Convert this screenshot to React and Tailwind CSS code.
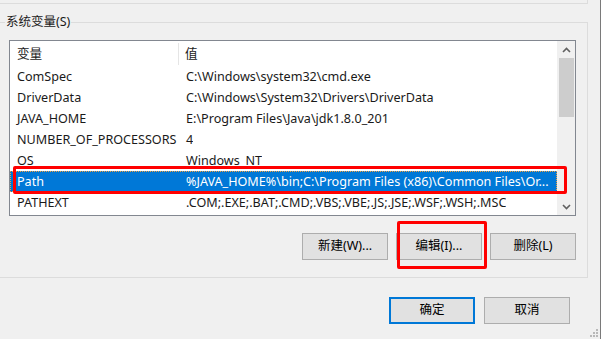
import React from "react";

const ROWS = [
  { name: "ComSpec", value: "C:\\Windows\\system32\\cmd.exe" },
  { name: "DriverData", value: "C:\\Windows\\System32\\Drivers\\DriverData" },
  { name: "JAVA_HOME", value: "E:\\Program Files\\Java\\jdk1.8.0_201" },
  { name: "NUMBER_OF_PROCESSORS", value: "4" },
  { name: "OS", value: "Windows_NT" },
  {
    name: "Path",
    value: "%JAVA_HOME%\\bin;C:\\Program Files (x86)\\Common Files\\Or...",
    selected: true,
  },
  { name: "PATHEXT", value: ".COM;.EXE;.BAT;.CMD;.VBS;.VBE;.JS;.JSE;.WSF;.WSH;.MSC" },
];

const FONT = { fontFamily: "'Noto Sans', 'Noto Sans CJK SC', sans-serif" };

const Chevron = ({ up }) => (
  <svg width="9" height="6" viewBox="0 0 9 6">
    <polyline
      points={up ? "1,5 4.5,1.5 8,5" : "1,1 4.5,4.5 8,1"}
      fill="none"
      stroke="#606060"
      strokeWidth="1.6"
    />
  </svg>
);

const WinButton = ({ children, primary }) => (
  <button
    className={
      primary
        ? "w-[86px] h-[27px] bg-[#e1e1e1] border-2 border-[#0078d7] text-[12.5px] text-black"
        : "w-[86px] h-[27px] bg-[#e1e1e1] border border-[#adadad] text-[12.5px] text-black"
    }
  >
    {children}
  </button>
);

export default function App() {
  return (
    <div
      className="w-[601px] h-[339px] bg-[#f0f0f0] overflow-hidden relative border-r border-[#7a7a7a] text-[#1a1a1a]"
      style={FONT}
    >
      {/* bottom of the previous group */}
      <div className="h-[4px] w-[588px] border-r border-b border-[#dcdcdc]" />

      {/* 系统变量 group */}
      <div className="mt-[18px] ml-[-2px] w-[590px] h-[256px] border border-[#dcdcdc] relative">
        <span className="absolute top-[-10px] left-[6px] px-[1px] bg-[#f0f0f0] text-[12.5px] leading-[18px]">
          系统变量(S)
        </span>

        {/* list view */}
        <div className="mt-[17px] ml-[10px] w-[567px] h-[176px] border border-[#828790] bg-white flex relative">
          <div className="flex-1 flex flex-col text-[12.6px] overflow-hidden">
            <div className="h-[25px] pt-[1px] flex items-center shrink-0">
              <div className="w-[168px] pl-[7px]">变量</div>
              <div className="w-px h-[22px] bg-[#e5e5e5]" />
              <div className="pl-[6px]">值</div>
            </div>
            {ROWS.map((row) => (
              <div
                key={row.name}
                className={
                  row.selected
                    ? "h-[21px] pt-[2px] flex items-center shrink-0 bg-[#0078d7] text-white border border-dotted border-[#f0a040]"
                    : "h-[21px] pt-[2px] flex items-center shrink-0 border border-transparent"
                }
              >
                <div className="w-[168px] shrink-0 pl-[6px] whitespace-nowrap">{row.name}</div>
                <div className="pl-[7px] whitespace-nowrap overflow-hidden">{row.value}</div>
              </div>
            ))}
          </div>

          {/* scrollbar */}
          <div className="w-[18px] shrink-0 border-l border-[#f0f0f0] bg-[#f0f0f0] flex flex-col">
            <div className="h-[17px] flex items-center justify-center">
              <Chevron up />
            </div>
            <div className="h-[59px] mx-[1px] bg-[#cdcdcd]" />
            <div className="flex-1" />
            <div className="h-[17px] flex items-center justify-center">
              <Chevron />
            </div>
          </div>

          {/* red highlight round the Path row */}
          <div className="absolute left-[3px] top-[125px] w-[554px] h-[28px] border-[3px] border-[#ff0000] rounded-[2px]" />
        </div>

        {/* 新建 / 编辑 / 删除 */}
        <div className="mt-[17px] flex justify-end gap-[8px] pr-[11px] relative">
          <WinButton>新建(W)...</WinButton>
          <WinButton>编辑(I)...</WinButton>
          <WinButton>删除(L)</WinButton>
          <div className="absolute left-[398px] top-[-12px] w-[90px] h-[48px] border-[3px] border-[#ff0000] rounded-[2px]" />
        </div>
      </div>

      {/* 确定 / 取消 */}
      <div className="mt-[19px] flex justify-end gap-[9px] pr-[30px]">
        <WinButton primary>确定</WinButton>
        <WinButton>取消</WinButton>
      </div>

      {/* resize grip */}
      <svg className="absolute right-[1px] bottom-[1px]" width="10" height="10" viewBox="0 0 10 10">
        <rect x="7" y="1" width="2" height="2" fill="#b8b8b8" />
        <rect x="4" y="4" width="2" height="2" fill="#b8b8b8" />
        <rect x="7" y="4" width="2" height="2" fill="#b8b8b8" />
        <rect x="1" y="7" width="2" height="2" fill="#b8b8b8" />
        <rect x="4" y="7" width="2" height="2" fill="#b8b8b8" />
        <rect x="7" y="7" width="2" height="2" fill="#b8b8b8" />
      </svg>
    </div>
  );
}
